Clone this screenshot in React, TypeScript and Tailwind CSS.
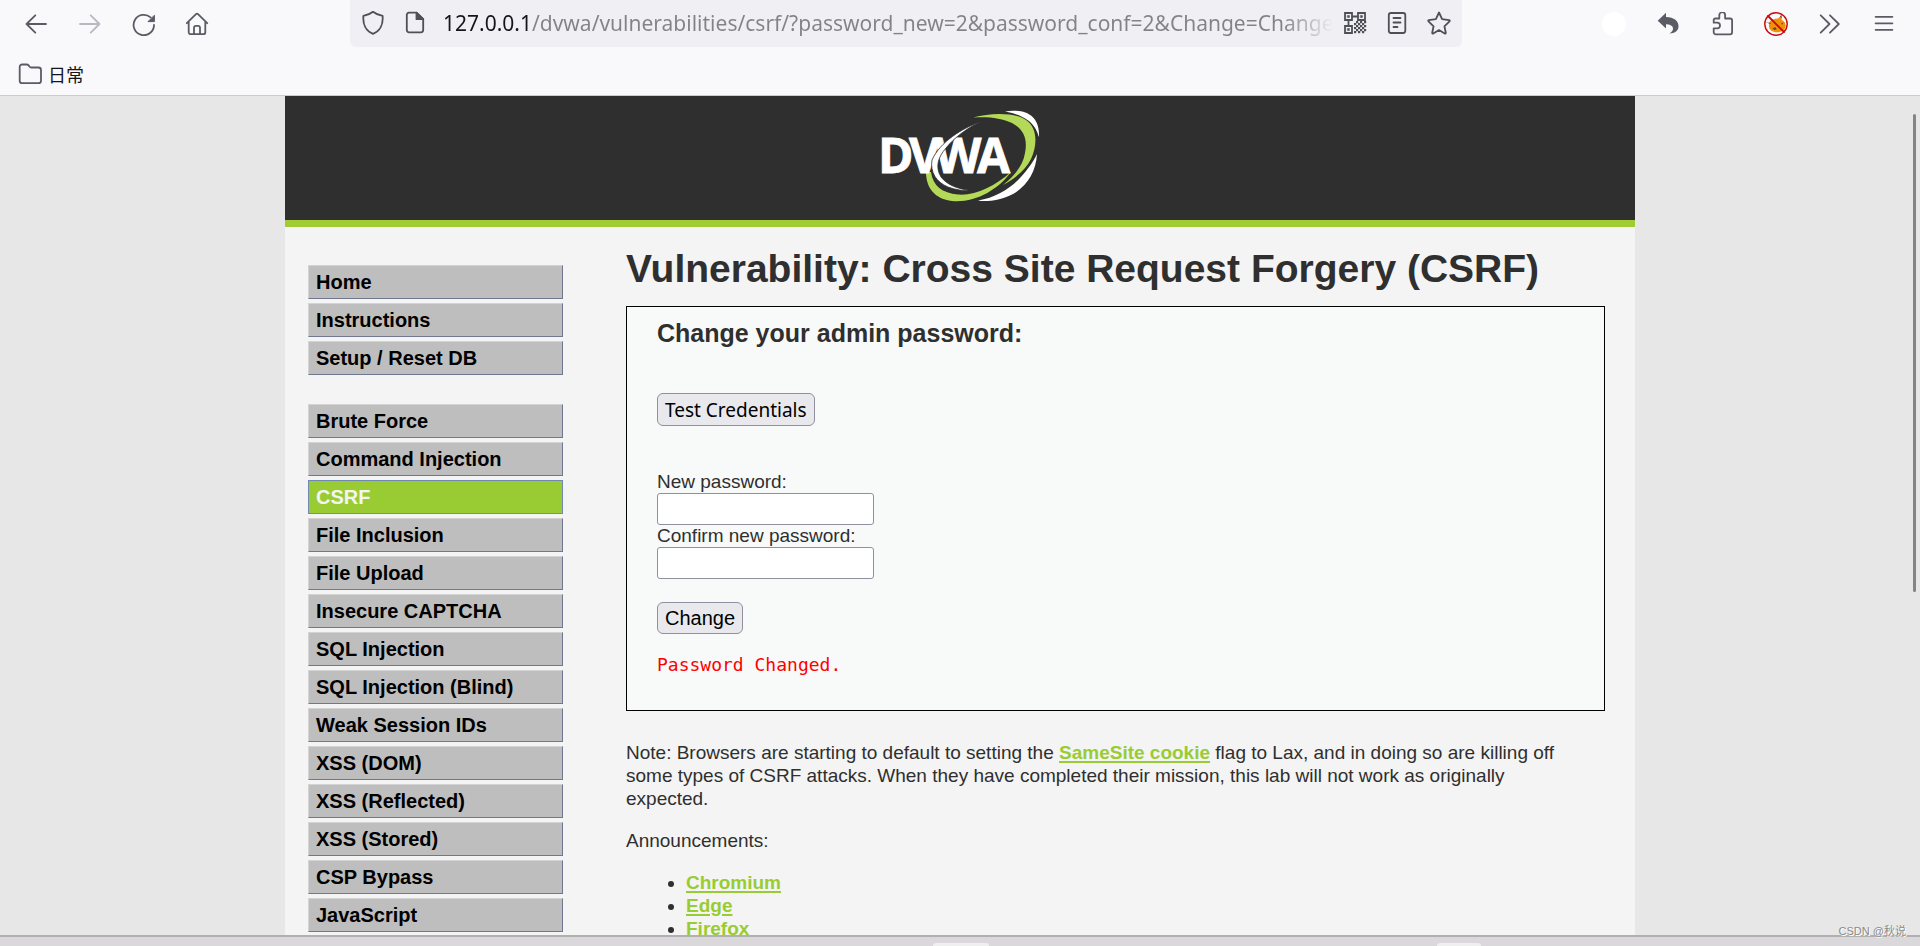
import React, { useState } from 'react';

interface IconProps {
  children: React.ReactNode;
}

const Icon: React.FC<IconProps> = ({ children }) => (
  <svg
    className="w-6 h-6 shrink-0"
    viewBox="0 0 24 24"
    fill="none"
    stroke="currentColor"
    strokeWidth="1.8"
    strokeLinecap="round"
    strokeLinejoin="round"
    aria-hidden="true"
  >
    {children}
  </svg>
);

interface ToolButtonProps {
  label: string;
  disabled?: boolean;
  children: React.ReactNode;
}

const ToolButton: React.FC<ToolButtonProps> = ({ label, disabled, children }) => (
  <button
    type="button"
    aria-label={label}
    disabled={disabled}
    className="w-[54px] h-[47px] flex items-center justify-center text-[#5b5b66] disabled:text-[#b9b9c1]"
  >
    <Icon>{children}</Icon>
  </button>
);

const UrlButton: React.FC<ToolButtonProps> = ({ label, children }) => (
  <button type="button" aria-label={label} className="w-[42px] h-[46px] flex items-center justify-center text-[#4f4f57]">
    <Icon>{children}</Icon>
  </button>
);

// Dark modules in the lower right corner of the QR icon
const qrDots = [
  [13, 10], [17, 10], [21, 10],
  [11, 12], [15, 12], [19, 12],
  [13, 14], [17, 14], [21, 14],
  [11, 16], [15, 16], [19, 16],
  [13, 18], [17, 18], [21, 18],
  [11, 20], [15, 20], [19, 20],
];

const Toolbar: React.FC = () => {
  const [url, setUrl] = useState('127.0.0.1/dvwa/vulnerabilities/csrf/?password_new=2&password_conf=2&Change=Change#');

  return (
    <div className="flex items-start px-[9px] h-12">
      <ToolButton label="Back">
        <path d="M22 12H2.5M11.3 3.3L2.5 12l8.8 8.7" />
      </ToolButton>
      <ToolButton label="Forward" disabled>
        <path d="M2 12h19.5M12.7 3.3L21.5 12l-8.8 8.7" />
      </ToolButton>
      <ToolButton label="Reload">
        <path d="M22 13A10.2 10.2 0 1 1 18.6 5.4" />
        <path d="M22.4 3.6V9.6H16.4Z" fill="currentColor" strokeWidth="1" />
      </ToolButton>
      <ToolButton label="Home">
        <path d="M.8 11.2L10 2.2a1.5 1.5 0 0 1 2 0l9.2 9M2.7 9.8v10.4a2 2 0 0 0 2 2h12.6a2 2 0 0 0 2-2V9.8M8 22v-6.2a2 2 0 0 1 2-2h2a2 2 0 0 1 2 2V22" />
      </ToolButton>

      <div className="flex-1 min-w-0 mx-[125px] h-[47px] px-[2px] flex items-start bg-[#f0eff4] rounded-b-md">
        <UrlButton label="Tracking protection">
          <path d="M12 .8c2.6 2.2 6 3.4 9.6 4C22.3 12.5 19.5 20 12 22.8 4.5 20 1.7 12.5 2.4 4.8 6 4.2 9.4 3 12 .8Z" />
        </UrlButton>
        <UrlButton label="Site information">
          <path d="M13.5 1.7H6a2.2 2.2 0 0 0-2.2 2.2v15.2A2.2 2.2 0 0 0 6 21.3h12a2.2 2.2 0 0 0 2.2-2.2V8.2Z" />
          <path d="M13.5 1.7v6.5h6.7Z" fill="currentColor" />
        </UrlButton>
        <input
          type="text"
          aria-label="Address"
          value={url}
          onChange={(e) => setUrl(e.target.value)}
          className="flex-1 min-w-0 h-[46px] ml-[7px] outline-none font-['Noto_Sans',sans-serif] text-[21px] text-transparent bg-clip-text bg-[linear-gradient(to_right,#15141a_88px,#838387_88px,#838387_840px,transparent_890px)]"
        />
        <UrlButton label="QR code">
          <g strokeWidth="1.8" strokeLinejoin="miter">
            <path d="M2 2h7v7H2ZM15 2h7v7h-7ZM2 15h7v7H2ZM9 5.5h6M5.5 9v6" />
            <path d="M4.6 4.6h1.8v1.8H4.6ZM17.6 4.6h1.8v1.8h-1.8ZM4.6 17.6h1.8v1.8H4.6Z" fill="currentColor" strokeWidth="0.6" />
          </g>
          <g fill="currentColor" stroke="none">
            {qrDots.map(([x, y]) => (
              <rect key={`${x}-${y}`} x={x} y={y} width="2.2" height="2.2" />
            ))}
          </g>
        </UrlButton>
        <UrlButton label="Reader view">
          <rect x="3.8" y="2" width="16.5" height="20" rx="2.2" />
          <path d="M8.5 7h7M8.5 11.5h7M8.5 16h4" />
        </UrlButton>
        <UrlButton label="Bookmark this page">
          <path d="M12 1.5l3.1 6.7 7 .9c.7.1.9.8.4 1.3l-5.1 4.9 1.4 6.4c.1.7-.5 1.1-1.1.8L12 19.1l-5.7 3.4c-.6.3-1.2-.1-1.1-.8l1.4-6.4-5.1-4.9c-.5-.5-.3-1.2.4-1.3l7-.9Z" />
        </UrlButton>
      </div>

      <ToolButton label="Account">
        <circle cx="12" cy="12" r="12" fill="#ffffff" stroke="none" />
      </ToolButton>
      <ToolButton label="Undo close tab">
        <path
          d="M1.7 8.8L10 .8V5c8 .3 13 4 12.5 10-.4 4-4 6.3-9 6.5 5-2.5 5.5-9-3.5-9.2V16.5Z"
          fill="currentColor"
          stroke="none"
        />
      </ToolButton>
      <ToolButton label="Extensions">
        <path d="M5.2 6.5h4.1V3.1a2.7 2.7 0 0 1 5.8 0v3.4h5a2 2 0 0 1 2 2v11.8a2 2 0 0 1-2 2H5.7a2 2 0 0 1-2-2v-4h3.5a2.8 2.8 0 0 0 0-5.600H3.7V8a1.5 1.5 0 0 1 1.5-1.500Z" />
      </ToolButton>
      <ToolButton label="FoxyProxy">
        <g stroke="none">
          <path d="M5 10.5c2-3 5-4 9-4l3.5-3.3.3 4.8c3 1.5 4.5 4 3.5 7.5-1 3-4 4.8-8 4.8-5 0-8.300-2.500-8.300-5.800Z" fill="#f0900c" />
          <path d="M16 4.5l1.4-1.7.3 3.5ZM1.7 10.2l5 .7-.2 1ZM8.5 16.3l3-1 1.2 2-2.4.7ZM17 11.5l2.5-1-1.5 2.2Z" fill="#5a4632" />
        </g>
        <circle cx="12" cy="12" r="11.2" stroke="#cc0a0a" strokeWidth="1.4" />
        <path d="M4 4l16 16" stroke="#cc0a0a" strokeWidth="1.8" />
      </ToolButton>
      <ToolButton label="More tools">
        <path d="M2.7 3.3l8.8 8.7-8.8 8.7M12 3.3l8.8 8.7-8.8 8.7" />
      </ToolButton>
      <ToolButton label="Open application menu">
        <path d="M3.6 4.8h16.8M3.6 11.3h16.8M3.6 17.8h16.8" />
      </ToolButton>
    </div>
  );
};

const Logo: React.FC = () => (
  <svg className="w-40 h-[92px]" viewBox="0 0 160 92" role="img" aria-label="DVWA">
    <path d="M46 62C46 78 55 89 72 91C95 93 118 80 131 62C115 76 95 86 78 84.5C62 83 53 76 51 62Z" fill="#b4d858" />
    <path d="M93 7.5C113 2 136 3 146 10C157 17 158 34 151 49C146 59 136 68 123 75C134 66 143 56 145 43C148 28 143 19 132 13C122 8 108 6.5 93 7.5Z" fill="#b4d858" />
    <text
      x="-2 29 55 97"
      y="63"
      fill="#ffffff"
      stroke="#ffffff"
      strokeWidth="0.8"
      className="font-['Open_Sans',sans-serif] font-bold text-[48px]"
    >
      DVWA
    </text>
    <path
      d="M102.5 11C82 18 60 32 52 50C50 62 56 72 68 77C76 80 84 81 91 80.5C78 79 67 75 61 67C55 57 58 47 66 38C74 28 88 17 102.5 11Z"
      fill="#ffffff"
      stroke="#2f2f2f"
      strokeWidth="0.8"
    />
    <path d="M125 1.5C145-1.5 160 5 159 27C156 17 150 6 125 1.5Z" fill="#ffffff" />
    <path d="M157 44C156 62 147 76 133 84C120 91 105 92 98 90.5C115 88 130 79 140 68C149 58 153 52 157 44Z" fill="#ffffff" />
  </svg>
);

const menuGroups = [
  ['Home', 'Instructions', 'Setup / Reset DB'],
  [
    'Brute Force',
    'Command Injection',
    'CSRF',
    'File Inclusion',
    'File Upload',
    'Insecure CAPTCHA',
    'SQL Injection',
    'SQL Injection (Blind)',
    'Weak Session IDs',
    'XSS (DOM)',
    'XSS (Reflected)',
    'XSS (Stored)',
    'CSP Bypass',
    'JavaScript',
  ],
];

const Sidebar: React.FC = () => (
  <nav className="w-[255px] shrink-0 pt-[38px] flex flex-col gap-[29px]">
    {menuGroups.map((group) => (
      <ul key={group[0]} className="flex flex-col gap-1">
        {group.map((item) => (
          <li key={item}>
            <a
              href="#"
              className={`flex items-center h-[34px] px-[7px] border text-[20px] leading-[23px] font-bold ${
                item === 'CSRF'
                  ? 'bg-[#99cc33] border-[#7089b0] text-[#f4f4f4]'
                  : 'bg-[#bebebe] border-t-[#d3d3d3] border-l-[#d3d3d3] border-r-[#70788f] border-b-[#70788f] text-black'
              }`}
            >
              {item}
            </a>
          </li>
        ))}
      </ul>
    ))}
  </nav>
);

const PasswordForm: React.FC = () => {
  const [newPassword, setNewPassword] = useState('');
  const [confirmPassword, setConfirmPassword] = useState('');

  return (
    <section className="border border-black bg-[#f8faf9] px-[30px] pt-3 pb-[34px]">
      <h2 className="text-[25px] leading-[29px] font-bold">Change your admin password:</h2>
      <button
        type="button"
        className="block mt-[45px] h-[33px] px-[7px] border border-[#8f8f9d] rounded-md bg-[#e9e9ed] text-black text-[19px] leading-[22px] font-['Noto_Sans',sans-serif]"
      >
        Test Credentials
      </button>
      <form className="mt-[45px] flex flex-col items-start" onSubmit={(e) => e.preventDefault()}>
        <label htmlFor="password_new" className="leading-[22px]">New password:</label>
        <input
          id="password_new"
          type="password"
          value={newPassword}
          onChange={(e) => setNewPassword(e.target.value)}
          className="w-[217px] h-8 px-1 bg-white border border-[#8f8f9d] rounded-[3px]"
        />
        <label htmlFor="password_conf" className="leading-[22px]">Confirm new password:</label>
        <input
          id="password_conf"
          type="password"
          value={confirmPassword}
          onChange={(e) => setConfirmPassword(e.target.value)}
          className="w-[217px] h-8 px-1 bg-white border border-[#8f8f9d] rounded-[3px]"
        />
        <button
          type="submit"
          className="mt-[23px] h-8 px-[7px] border border-[#8f8f9d] rounded-md bg-[#e9e9ed] text-black text-[20px] leading-[22px]"
        >
          Change
        </button>
      </form>
      <pre className="mt-5 text-[18px] leading-[22px] text-[#ff0000] font-['DejaVu_Sans_Mono',monospace]">Password Changed.</pre>
    </section>
  );
};

const linkClass = 'font-bold text-[#99cc33] underline decoration-2 underline-offset-2';

const App: React.FC = () => {
  return (
    <div className="h-screen flex flex-col overflow-hidden bg-[#e7e7e7] font-['Liberation_Sans',Arial,sans-serif]">
      <header className="shrink-0 bg-[#f9f9fb] border-b border-[#cccccf]">
        <Toolbar />
        <div className="h-[47px] pt-[5px] px-[18px] flex items-center">
          <a href="#" className="flex items-center gap-[6px] text-[18px] leading-6 text-[#15141a] font-['Noto_Sans_CJK_SC',sans-serif]">
            <span className="text-[#5b5b66]">
              <Icon>
                <path d="M4.2 2.5h4.5c.8 0 1.4.3 1.9.9l1 1.3c.4.5.9.8 1.6.8h7.3a2.5 2.5 0 0 1 2.5 2.5v10.7a2.5 2.5 0 0 1-2.500 2.500H4.2a2.5 2.5 0 0 1-2.500-2.500V5a2.5 2.5 0 0 1 2.500-2.500Z" />
              </Icon>
            </span>
            日常
          </a>
        </div>
      </header>

      <div className="relative flex-1 min-h-0 overflow-hidden">
        <div className="max-w-[1350px] min-h-full mx-auto bg-[#f4f4f4] text-[#2f2f2f]">
          <div className="h-[131px] pt-[14px] flex justify-center bg-[#2f2f2f] border-b-[7px] border-[#a1cc33]">
            <Logo />
          </div>
          <div className="flex pl-[23px] pr-[30px]">
            <Sidebar />
            <main className="flex-1 min-w-0 ml-[63px] pt-[19px] text-[19px] leading-[23px]">
              <h1 className="mb-[15px] text-[39px] leading-[45px] font-bold">
                Vulnerability: Cross Site Request Forgery (CSRF)
              </h1>
              <PasswordForm />
              <p className="mt-[30px] pr-5">
                Note: Browsers are starting to default to setting the{' '}
                <a href="#" className={linkClass}>SameSite cookie</a> flag to Lax, and in doing so are killing off some
                types of CSRF attacks. When they have completed their mission, this lab will not work as originally
                expected.
              </p>
              <p className="mt-[19px]">Announcements:</p>
              <ul className="mt-[19px] pl-[60px] list-disc">
                <li><a href="#" className={linkClass}>Chromium</a></li>
                <li><a href="#" className={linkClass}>Edge</a></li>
                <li><a href="#" className={linkClass}>Firefox</a></li>
              </ul>
            </main>
          </div>
        </div>
        {/* Scrollbar thumb */}
        <div className="absolute right-1 top-[18px] w-[3px] h-[57%] rounded-full bg-[#858585]" />
      </div>

      <footer className="relative shrink-0 h-[11px] border-t-2 border-[#b0b0b0] bg-[#dad8da]">
        <div className="absolute bottom-0 left-[933px] w-14 h-[3px] rounded-t-sm bg-[#f0eff0]" />
        <div className="absolute bottom-0 left-[1437px] w-11 h-[3px] rounded-t-sm bg-[#f0eff0]" />
        <span className="absolute right-[14px] bottom-[6px] text-[11px] leading-[18px] whitespace-nowrap text-[#8a8a8a] text-shadow-[1px_1px_0_#ffffff] font-['Liberation_Sans','Noto_Sans_CJK_SC',sans-serif]">
          CSDN @秋说
        </span>
      </footer>
    </div>
  );
};

export default App;
